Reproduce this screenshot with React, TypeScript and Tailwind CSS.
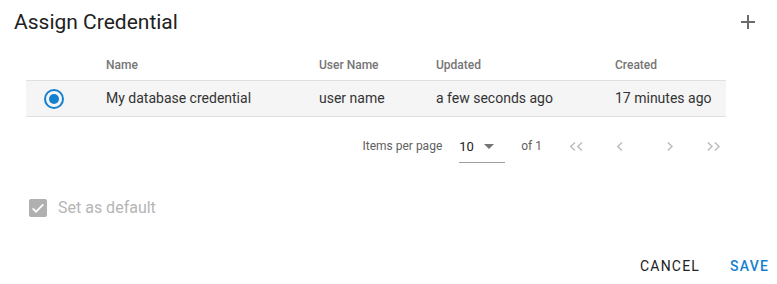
const columns = ["Name", "User Name", "Updated", "Created"];

const row = {
  name: "My database credential",
  user: "user name",
  updated: "a few seconds ago",
  created: "17 minutes ago",
};

const Chevron = ({ dir, double }: { dir: "left" | "right"; double?: boolean }) => {
  const w = double ? 13 : 6;
  const pts = (x: number) =>
    dir === "left" ? `${x + 5},0.5 ${x + 0.8},4.5 ${x + 5},8.5` : `${x + 0.8},0.5 ${x + 5},4.5 ${x + 0.8},8.5`;
  return (
    <svg width={w} height="9" viewBox={`0 0 ${w} 9`} className="overflow-visible">
      <polyline points={pts(0)} fill="none" stroke="#bdbdbd" strokeWidth="1.5" />
      {double && <polyline points={pts(7)} fill="none" stroke="#bdbdbd" strokeWidth="1.5" />}
    </svg>
  );
};

const App = () => {
  return (
    <div className="w-[777px] h-[284px] bg-white text-[#212121] font-['Roboto',sans-serif] flex flex-col">
      {/* header */}
      <div className="h-[42px] flex items-center justify-between pl-[14px] pr-[22px] pt-[1px]">
        <h2 className="text-[21px] leading-[24px] font-normal text-[#212121]">Assign Credential</h2>
        <svg width="14" height="14" viewBox="0 0 14 14">
          <path d="M7 0v14M0 7h14" stroke="#6b6b6b" strokeWidth="2" />
        </svg>
      </div>

      {/* table */}
      <div className="ml-[26px] w-[700px] mt-[8px]">
        <div className="grid grid-cols-[80px_213px_117px_179px_1fr] h-[31px] items-center border-b border-[#e0e0e0] text-[12px] font-medium text-[#757575]">
          <div />
          {columns.map((c) => (
            <div key={c}>{c}</div>
          ))}
        </div>
        <div className="grid grid-cols-[80px_213px_117px_179px_1fr] h-[36px] items-center bg-[#f5f5f5] border-b border-[#e0e0e0] text-[14px] text-[#333333]">
          <div className="pl-[18px] flex items-center">
            <span className="w-[20px] h-[20px] rounded-full border-2 border-[#1480d0] flex items-center justify-center">
              <span className="w-[10px] h-[10px] rounded-full bg-[#1480d0]" />
            </span>
          </div>
          <div>{row.name}</div>
          <div>{row.user}</div>
          <div>{row.updated}</div>
          <div>{row.created}</div>
        </div>

        {/* paginator */}
        <div className="h-[58px] flex items-center justify-end pr-[6px] text-[12px] text-[#616161]">
          <span>Items per page</span>
          <div className="ml-[17px] w-[46px] h-[34px] flex items-center justify-between border-b border-[#9e9e9e] pt-[2px] text-[13px] text-[#212121]">
            <span>10</span>
            <svg width="10" height="5" viewBox="0 0 10 5" className="mr-[11px]">
              <path d="M0 0h10L5 5z" fill="#757575" />
            </svg>
          </div>
          <span className="ml-[16px] text-[#616161]">of 1</span>
          <span className="ml-[28px] flex">
            <Chevron dir="left" double />
          </span>
          <span className="ml-[34px] flex">
            <Chevron dir="left" />
          </span>
          <span className="ml-[44px] flex">
            <Chevron dir="right" />
          </span>
          <span className="ml-[34px] flex">
            <Chevron dir="right" double />
          </span>
        </div>
      </div>

      {/* default checkbox */}
      <div className="ml-[29px] mt-[21px] flex items-center gap-[11px]">
        <span className="w-[18px] h-[18px] rounded-[2px] bg-[#b0b0b0] flex items-center justify-center">
          <svg width="16" height="16" viewBox="0 0 24 24">
            <path d="M4 12.5l5 5L20 6.5" fill="none" stroke="white" strokeWidth="2.6" />
          </svg>
        </span>
        <span className="text-[16px] text-[#b5b5b5]">Set as default</span>
      </div>

      {/* actions */}
      <div className="mt-auto flex justify-end items-center pr-[8px] text-[14px] font-normal tracking-[1.2px]">
        <button className="h-[36px] text-[#212121]">CANCEL</button>
        <button className="h-[36px] ml-[30px] text-[#1480d0] font-medium">SAVE</button>
      </div>
    </div>
  );
};

export default App;
